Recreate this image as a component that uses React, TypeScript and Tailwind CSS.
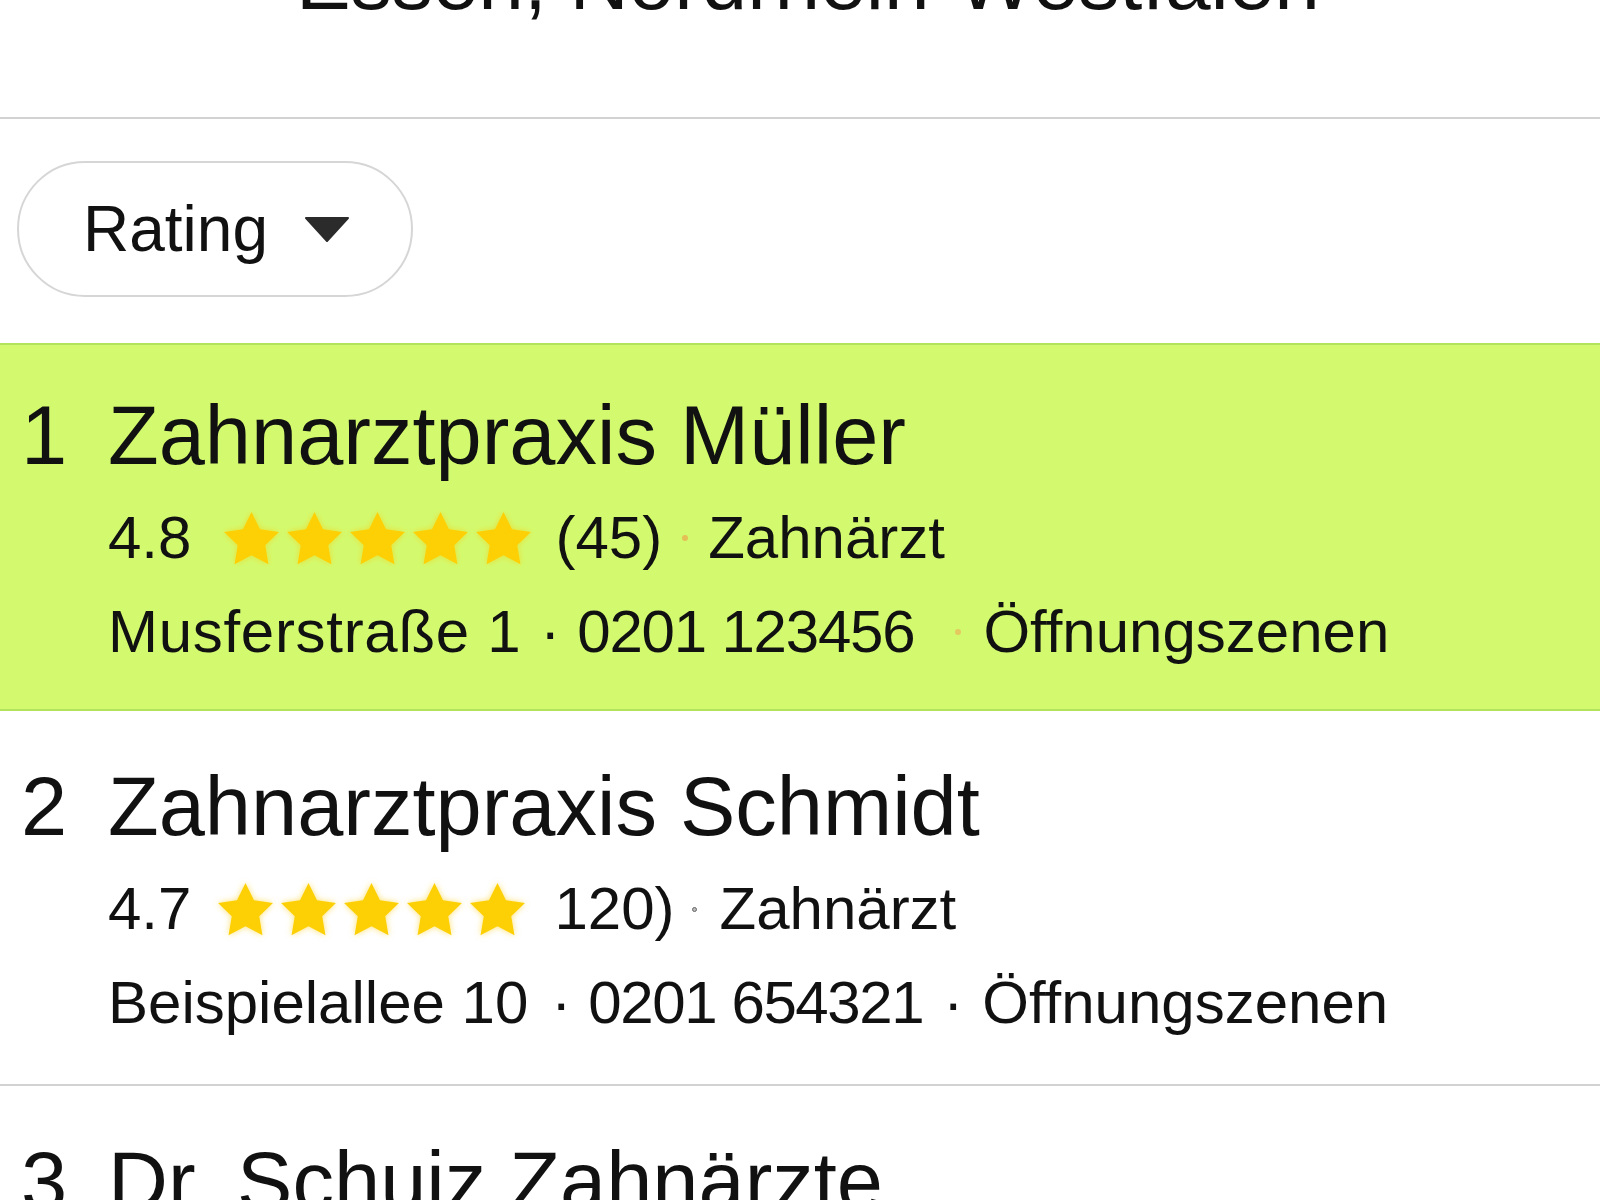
import React from "react";

type Row = {
  rank: number;
  name: string;
  rating: string;
  reviews: string;
  category: string;
  address: string;
  phone: string;
  hours: string;
  highlight?: boolean;
};

const rows: Row[] = [
  {
    rank: 1,
    name: "Zahnarztpraxis Müller",
    rating: "4.8",
    reviews: "(45)",
    category: "Zahnärzt",
    address: "Musferstraße 1",
    phone: "0201 123456",
    hours: "Öffnungszenen",
    highlight: true,
  },
  {
    rank: 2,
    name: "Zahnarztpraxis Schmidt",
    rating: "4.7",
    reviews: "120)",
    category: "Zahnärzt",
    address: "Beispielallee 10",
    phone: "0201 654321",
    hours: "Öffnungszenen",
  },
  {
    rank: 3,
    name: "Dr. Schuiz Zahnärzte",
    rating: "4.6",
    reviews: "(88)",
    category: "Zahnärzt",
    address: "Hauptstraße 5",
    phone: "0201 987654",
    hours: "Öffnungszenen",
  },
];

function Star() {
  return (
    <svg width="55" height="53" viewBox="2 2 20 19.3" className="drop-shadow-[0_0_3px_rgba(255,200,0,0.55)]">
      <polygon
        points="12,2 15.09,8.26 22,9.27 17,14.14 18.18,21.02 12,17.77 5.82,21.02 7,14.14 2,9.27 8.91,8.26"
        fill="#fdd005"
      />
    </svg>
  );
}

function Stars({ className }: { className?: string }) {
  return (
    <div className={`flex gap-[8px] ${className ?? ""}`}>
      {[0, 1, 2, 3, 4].map((i) => (
        <Star key={i} />
      ))}
    </div>
  );
}

function ResultRow({ row }: { row: Row }) {
  const first = row.highlight;
  return (
    <div
      className={
        first
          ? "border-y-2 border-[#b3e35c] bg-[#d3fa6f] pl-[18px] pt-[43px] pb-[30px]"
          : "border-b-2 border-[#d2d2d2] pl-[18px] pt-[48px] pb-[34px]"
      }
    >
      <div className="flex text-[83px] leading-[96px] text-[#111]">
        <span className="w-[90px] shrink-0 pl-[3px]">{row.rank}</span>
        <span className="whitespace-nowrap">{row.name}</span>
      </div>
      <div className="pl-[90px]">
        <div className="mt-[7px] flex h-[94px] items-center whitespace-nowrap text-[60px] leading-[94px] text-[#111]">
          <span>{row.rating}</span>
          <Stars className={first ? "ml-[33px]" : "ml-[27px]"} />
          <span className={first ? "ml-[24px]" : "ml-[29px]"}>{row.reviews}</span>
          {first ? (
            <span className="ml-[20px] mr-[20px] h-[6px] w-[6px] rounded-full bg-[#e9b04f] opacity-80" />
          ) : (
            <span className="ml-[17px] mr-[23px] h-[5px] w-[5px] rounded-full border border-[#666] bg-[#bbb]" />
          )}
          <span>{row.category}</span>
        </div>
        {first ? (
          <div className="flex h-[94px] items-center whitespace-nowrap text-[60px] leading-[94px] text-[#111]">
            <span className="tracking-[0.7px]">{row.address}</span>
            <span className="ml-[19px]">·</span>
            <span className="ml-[17px] tracking-[-1.2px]">{row.phone}</span>
            <span className="ml-[41px] h-[6px] w-[6px] rounded-full bg-[#eab457] opacity-70" />
            <span className="ml-[22px]">{row.hours}</span>
          </div>
        ) : (
          <div className="flex h-[94px] items-center whitespace-nowrap text-[60px] leading-[94px] text-[#111]">
            <span>{row.address}</span>
            <span className="ml-[23px]">·</span>
            <span className="ml-[17px] tracking-[-1.4px]">{row.phone}</span>
            <span className="ml-[20px]">·</span>
            <span className="ml-[19px]">{row.hours}</span>
          </div>
        )}
      </div>
    </div>
  );
}

export default function App() {
  return (
    <main
      className="h-[1200px] w-[1600px] overflow-hidden bg-white"
      style={{ fontFamily: '"Liberation Sans", Arial, sans-serif' }}
    >
      <header className="h-[119px] overflow-hidden border-b-2 border-[#d2d2d2]">
        <h1 className="-mt-[60px] pl-[16px] text-center text-[82px] leading-none text-[#111]">
          Essen, Nordrhein-Westfalen
        </h1>
      </header>

      <div className="pl-[17px] pt-[42px] pb-[46px]">
        <button className="flex h-[136px] w-[396px] items-center rounded-full border-2 border-[#d6d6d6] bg-white pl-[64px]">
          <span className="text-[64px] leading-none text-[#111]">Rating</span>
          <svg width="44" height="25" viewBox="0 0 44 25" className="ml-[37px]">
            <polygon points="1,1 43,1 22,24" fill="#2b2b2b" strokeLinejoin="round" stroke="#2b2b2b" strokeWidth="2" />
          </svg>
        </button>
      </div>

      {rows.map((row) => (
        <ResultRow key={row.rank} row={row} />
      ))}
    </main>
  );
}
